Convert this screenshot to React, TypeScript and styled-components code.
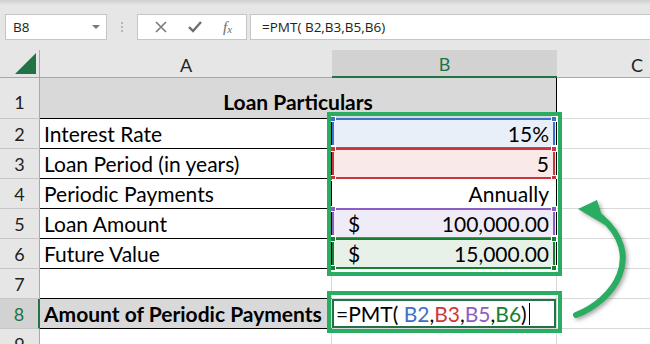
import React from 'react';
import styled, { createGlobalStyle } from 'styled-components';

const GlobalStyle = createGlobalStyle`
    body {
        margin: 0;
        background: #ffffff;
        font-family: Lato, "Liberation Sans", sans-serif;
    }
`;

const green = '#217346';
const markGreen = '#2aad62';
const grid = '#d9d9d9';

type RefRow = {
    row: number;
    label: string;
    value: string;
    dollar?: boolean;
    color: string;
    fill: string;
};

const refRows: RefRow[] = [
    { row: 2, label: 'Interest Rate', value: '15%', color: '#3d70c8', fill: '#e9eff9' },
    { row: 3, label: 'Loan Period (in years)', value: '5', color: '#c8353c', fill: '#f9e9e9' },
    { row: 4, label: 'Periodic Payments', value: 'Annually', color: '', fill: '#ffffff' },
    { row: 5, label: 'Loan Amount', value: '100,000.00', dollar: true, color: '#8b5ec4', fill: '#efebf7' },
    { row: 6, label: 'Future Value', value: '15,000.00', dollar: true, color: '#15802f', fill: '#e7f1e8' },
];

const CornerHandles = ({ color }: { color: string }) => (
    <>
        <S.Handle $color={color} $v="top" $h="left" />
        <S.Handle $color={color} $v="top" $h="right" />
        <S.Handle $color={color} $v="bottom" $h="left" />
        <S.Handle $color={color} $v="bottom" $h="right" />
    </>
);

const App = () => {
    return <S.Page>
        <GlobalStyle />
        <S.Toolbar>
            <S.NameBox>
                B8
                <S.Caret />
            </S.NameBox>
            <S.Grip>
                <span /><span /><span />
            </S.Grip>
            <S.FxGroup>
                <svg width="14" height="14" viewBox="0 0 14 14">
                    <path d="M2 2 L12 12 M12 2 L2 12" stroke="#7a7a7a" strokeWidth="1.6" fill="none" />
                </svg>
                <svg width="16" height="14" viewBox="0 0 16 14">
                    <path d="M2 7 L6 11 L14 2" stroke="#6f6f6f" strokeWidth="2.4" fill="none" />
                </svg>
                <S.FxLabel>f<sub>x</sub></S.FxLabel>
            </S.FxGroup>
            <S.FormulaInput>=PMT( B2,B3,B5,B6)</S.FormulaInput>
        </S.Toolbar>

        <S.Sheet>
            <S.Corner><S.Triangle /></S.Corner>
            <S.ColHeader>A</S.ColHeader>
            <S.ColHeader $selected>B</S.ColHeader>
            <S.ColHeader>C</S.ColHeader>

            <S.RowHeader $tall>1</S.RowHeader>
            <S.TitleCell>Loan Particulars</S.TitleCell>
            <S.Cell />

            {refRows.map((r) => (
                <React.Fragment key={r.row}>
                    <S.RowHeader>{r.row}</S.RowHeader>
                    <S.Cell $right="#000" $bottom="#000">{r.label}</S.Cell>
                    <S.ValueCell $fill={r.fill}>
                        {r.color && <S.RefFrame $color={r.color}><CornerHandles color={r.color} /></S.RefFrame>}
                        <span>{r.dollar ? '$' : ''}</span>
                        <span>{r.value}</span>
                    </S.ValueCell>
                    <S.Cell />
                </React.Fragment>
            ))}

            <S.RowHeader>7</S.RowHeader>
            <S.Cell $bottom="#000" />
            <S.Cell />
            <S.Cell />

            <S.RowHeader $selected>8</S.RowHeader>
            <S.Cell $bottom="#000" $fill="#d9d9d9" $bold>Amount of Periodic Payments</S.Cell>
            <S.ActiveCell>
                =PMT(&nbsp;
                <S.Ref $color="#3d70c8">B2</S.Ref>,
                <S.Ref $color="#d0363c">B3</S.Ref>,
                <S.Ref $color="#8b5ec4">B5</S.Ref>,
                <S.Ref $color="#15802f">B6</S.Ref>)
                <S.TextCaret />
            </S.ActiveCell>
            <S.Cell />

            <S.RowHeader>9</S.RowHeader>
            <S.Cell />
            <S.Cell />
            <S.Cell />

            <S.Mark $top={62} $height={164} />
            <S.Mark $top={241} $height={42} />
            <S.Arrow width="80" height="150" viewBox="560 180 80 150">
                <path d="M576 315 C615 300, 645 255, 601 217" stroke={markGreen} strokeWidth="6" strokeLinecap="round" fill="none" />
                <path d="M578 209 L597 200 L605 225 Z" fill={markGreen} />
            </S.Arrow>
        </S.Sheet>
    </S.Page>
};

export default App;

const S = {
    Page: styled.div`
        width: 650px;
        height: 344px;
        overflow: hidden;
        background: #e6e6e6;
    `,
    Toolbar: styled.div`
        display: flex;
        align-items: flex-start;
        height: 50px;
        box-sizing: border-box;
        padding: 14px 0 0 5px;
        background: linear-gradient(#cfcfcf 0, #e6e6e6 5px, #e6e6e6);
        font-family: "Open Sans", "Noto Sans", sans-serif;
        font-size: 13.5px;
        color: #222;
    `,
    NameBox: styled.div`
        display: flex;
        align-items: center;
        justify-content: space-between;
        width: 102px;
        height: 26px;
        box-sizing: border-box;
        padding: 0 6px 0 7px;
        background: #fff;
        border: 1px solid #c6c6c6;
    `,
    Caret: styled.span`
        width: 0;
        height: 0;
        border-left: 4px solid transparent;
        border-right: 4px solid transparent;
        border-top: 4px solid #777;
    `,
    Grip: styled.div`
        display: flex;
        flex-direction: column;
        align-items: center;
        justify-content: center;
        gap: 2px;
        width: 30px;
        height: 26px;
        span {
            width: 2px;
            height: 2px;
            background: #b4b4b4;
        }
    `,
    FxGroup: styled.div`
        display: flex;
        align-items: center;
        justify-content: space-around;
        width: 110px;
        height: 26px;
        box-sizing: border-box;
        padding: 0 4px 0 6px;
        background: #fff;
        border: 1px solid #c6c6c6;
    `,
    FxLabel: styled.span`
        font-family: "Liberation Serif", serif;
        font-style: italic;
        font-size: 15px;
        color: #6a6a6a;
        sub {
            font-size: 11px;
            vertical-align: -1px;
        }
    `,
    FormulaInput: styled.div`
        flex: 1;
        display: flex;
        align-items: center;
        height: 26px;
        margin-left: 3px;
        box-sizing: border-box;
        padding-left: 11px;
        background: #fff;
        border: 1px solid #c6c6c6;
        border-right: none;
        white-space: nowrap;
    `,
    Sheet: styled.div`
        position: relative;
        display: grid;
        grid-template-columns: 40px 292px 225px 160px;
        grid-template-rows: 28px 41px repeat(8, 30px);
        background: #fff;
        font-size: 21px;
        line-height: 24px;
        color: #000;
    `,
    Corner: styled.div`
        display: flex;
        align-items: flex-end;
        justify-content: flex-end;
        padding: 0 3px 3px 0;
        background: #e6e6e6;
        border-right: 1px solid #a8a8a8;
        border-bottom: 1px solid #a8a8a8;
    `,
    Triangle: styled.div`
        width: 21px;
        height: 21px;
        background: ${green};
        clip-path: polygon(100% 0, 100% 100%, 0 100%);
    `,
    ColHeader: styled.div<{ $selected?: boolean }>`
        display: flex;
        align-items: center;
        justify-content: center;
        padding-top: 2px;
        font-size: 18px;
        color: ${(p) => (p.$selected ? green : '#222')};
        background: ${(p) => (p.$selected ? '#d2d2d2' : '#e6e6e6')};
        border-bottom: ${(p) => (p.$selected ? `2px solid ${green}` : '1px solid #a8a8a8')};
    `,
    RowHeader: styled.div<{ $selected?: boolean; $tall?: boolean }>`
        display: flex;
        align-items: flex-end;
        justify-content: center;
        padding-bottom: ${(p) => (p.$tall ? 4 : 2)}px;
        font-size: 18px;
        color: ${(p) => (p.$selected ? green : '#222')};
        background: ${(p) => (p.$selected ? '#d2d2d2' : '#e6e6e6')};
        border-bottom: 1px solid #c6c6c6;
        border-right: ${(p) => (p.$selected ? `2px solid ${green}` : '1px solid #a8a8a8')};
    `,
    Cell: styled.div<{ $right?: string; $bottom?: string; $fill?: string; $bold?: boolean }>`
        display: flex;
        align-items: flex-end;
        padding: 0 0 2px 4px;
        white-space: nowrap;
        font-weight: ${(p) => (p.$bold ? 700 : 400)};
        background: ${(p) => p.$fill || '#fff'};
        border-right: 1px solid ${(p) => p.$right || grid};
        border-bottom: 1px solid ${(p) => p.$bottom || grid};
    `,
    TitleCell: styled.div`
        grid-column: span 2;
        display: flex;
        align-items: flex-end;
        justify-content: center;
        padding-bottom: 4px;
        font-weight: 700;
        background: #d9d9d9;
        border-right: 1px solid #000;
        border-bottom: 1px solid #000;
    `,
    ValueCell: styled.div<{ $fill: string }>`
        position: relative;
        display: flex;
        align-items: flex-end;
        justify-content: space-between;
        padding: 0 7px 2px 16px;
        background: ${(p) => p.$fill};
        border-right: 1px solid #000;
        border-bottom: 1px solid #000;
    `,
    RefFrame: styled.div<{ $color: string }>`
        position: absolute;
        top: -1px;
        left: 0;
        right: 1px;
        bottom: -1px;
        border: 2px solid ${(p) => p.$color};
    `,
    Handle: styled.span<{ $color: string; $v: 'top' | 'bottom'; $h: 'left' | 'right' }>`
        position: absolute;
        ${(p) => p.$v}: -4px;
        ${(p) => p.$h}: -4px;
        width: 4px;
        height: 4px;
        background: ${(p) => p.$color};
        border: 1px solid #fff;
    `,
    ActiveCell: styled.div`
        display: flex;
        align-items: flex-end;
        padding: 0 0 2px 4px;
        white-space: pre;
        box-shadow: inset 0 0 0 2px ${green};
        border-right: 1px solid ${grid};
        border-bottom: 1px solid ${grid};
    `,
    Ref: styled.span<{ $color: string }>`
        color: ${(p) => p.$color};
    `,
    TextCaret: styled.span`
        width: 1.5px;
        height: 22px;
        margin: 0 0 1px 2px;
        background: #000;
    `,
    Mark: styled.div<{ $top: number; $height: number }>`
        position: absolute;
        left: 327px;
        top: ${(p) => p.$top}px;
        width: 235px;
        height: ${(p) => p.$height}px;
        box-sizing: border-box;
        border: 4px solid ${markGreen};
    `,
    Arrow: styled.svg`
        position: absolute;
        left: 560px;
        top: 130px;
        filter: drop-shadow(2px 2px 2px rgba(0, 0, 0, 0.35));
    `,
};
